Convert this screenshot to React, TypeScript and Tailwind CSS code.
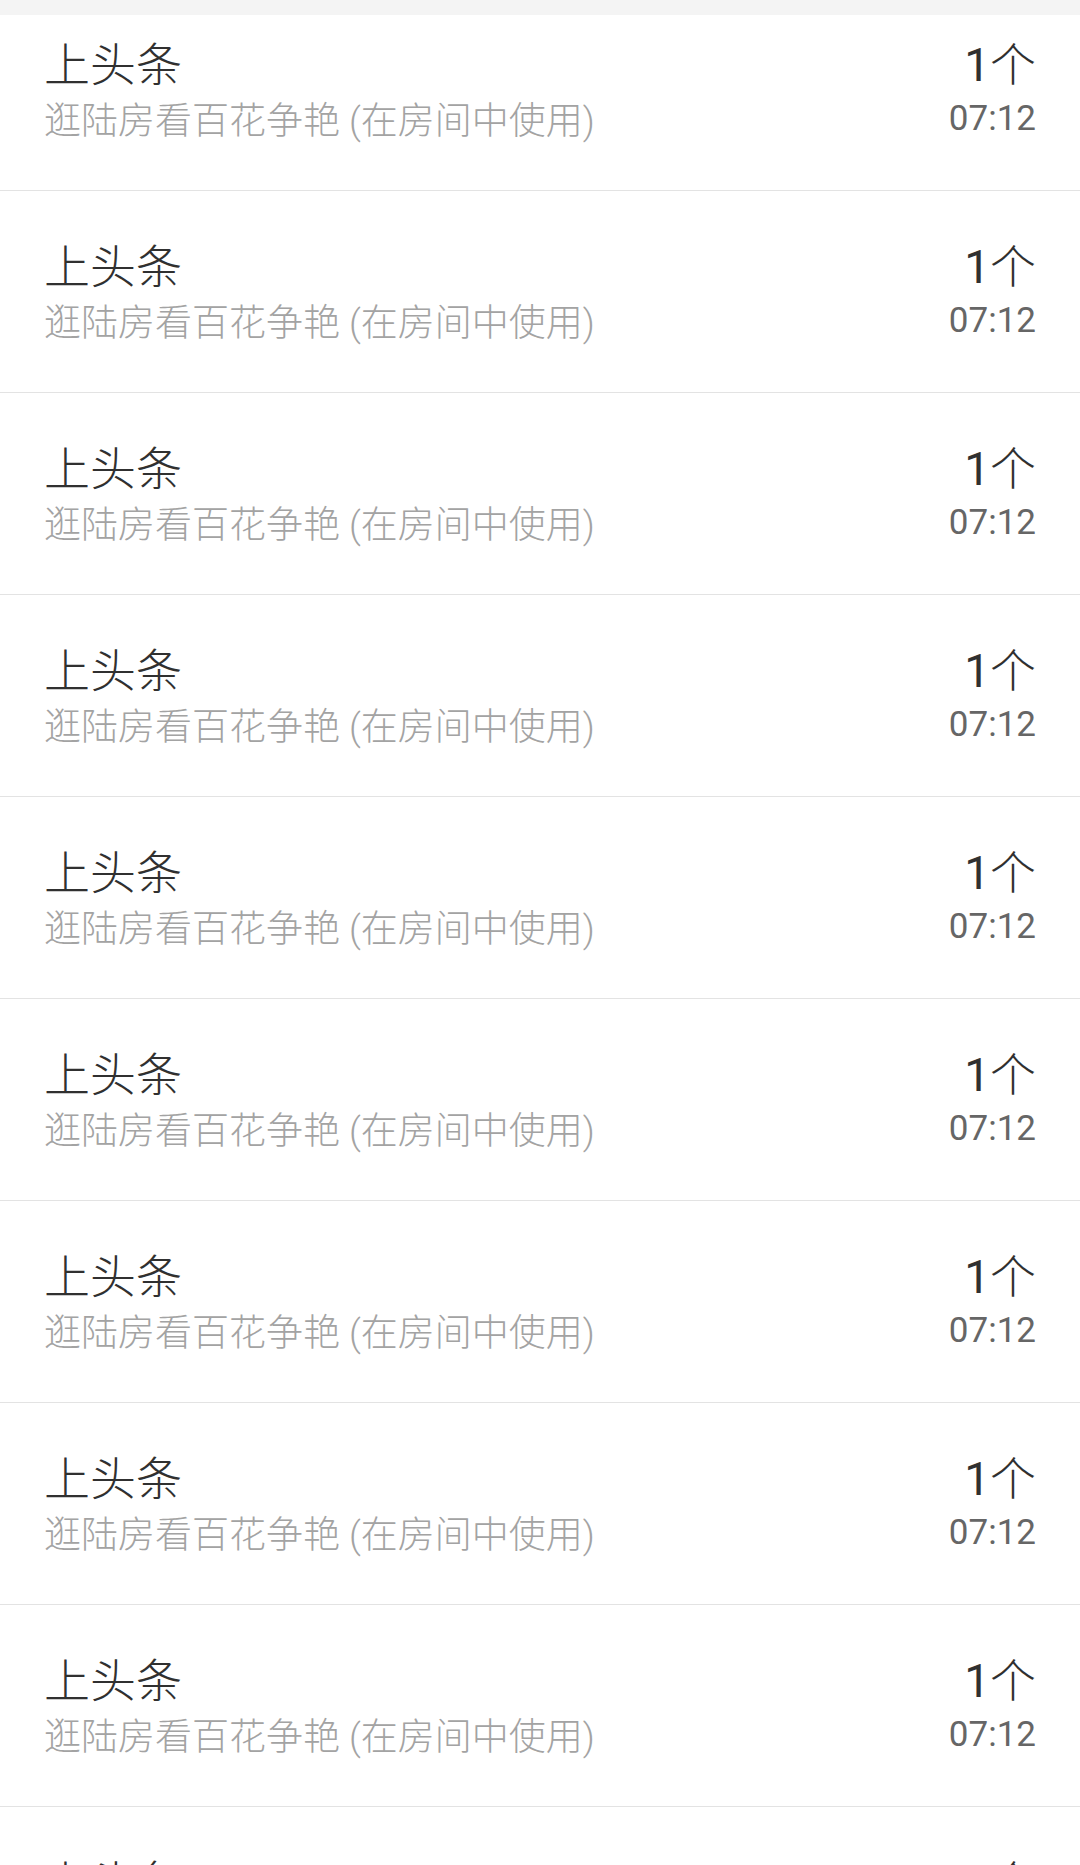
import React from 'react';

interface GiftRecord {
  title: string;
  desc: string;
  count: number;
  unit: string;
  time: string;
}

const records: GiftRecord[] = Array.from({ length: 11 }, () => ({
  title: '上头条',
  desc: '逛陆房看百花争艳 (在房间中使用)',
  count: 1,
  unit: '个',
  time: '07:12',
}));

const RecordRow: React.FC<{ record: GiftRecord }> = ({ record }) => (
  <div className="flex h-[202px] shrink-0 items-start justify-between border-b border-[#e3e3e3] px-[44px] pt-[48px]">
    <div className="flex flex-col">
      <span className="block text-[46px] font-light leading-[56px] text-[#303030]">{record.title}</span>
      <span className="block text-[37px] font-light leading-[58px] text-[#a3a3a3]">{record.desc}</span>
    </div>
    <div className="flex flex-col items-end">
      <span className="block text-[46px] leading-[56px] text-[#303030]">
        {record.count}
        <span className="font-light">{record.unit}</span>
      </span>
      <span className="block text-[35px] leading-[52px] text-[#666666]">{record.time}</span>
    </div>
  </div>
);

export default function App() {
  return (
    <div
      className="flex h-[1865px] w-[1080px] flex-col overflow-hidden bg-white"
      style={{ fontFamily: 'Roboto, "Noto Sans CJK SC", sans-serif' }}
    >
      <div className="h-[15px] shrink-0 bg-[#f4f4f4]" />
      <div className="flex-1 overflow-hidden">
        <div className="-mt-[26px] flex flex-col">
          {records.map((r, i) => (
            <RecordRow key={i} record={r} />
          ))}
        </div>
      </div>
    </div>
  );
}
